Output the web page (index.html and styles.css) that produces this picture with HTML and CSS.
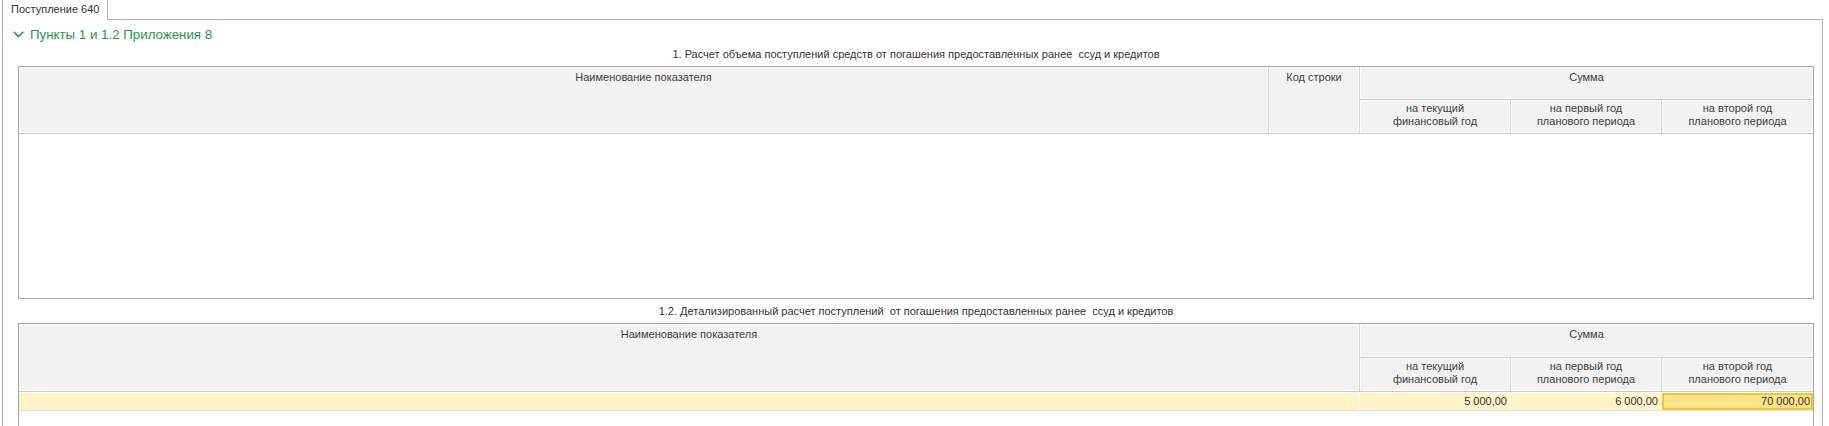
FILE: index.html
```html
<!DOCTYPE html>
<html lang="ru">
<head>
<meta charset="utf-8">
<title>Поступление 640</title>
<link rel="stylesheet" href="styles.css">
</head>
<body>
<div class="tabs">
  <div class="tab">Поступление 640</div>
  <div class="tabs-fill"></div>
</div>
<div class="panel">
  <div class="group-title">
    <svg class="chev" width="11" height="7" viewBox="0 0 11 7"><path d="M0.7 0.8 L5.5 5.6 L10.3 0.8" fill="none" stroke="#26964b" stroke-width="1.5"/></svg>
    <span>Пункты 1 и 1.2 Приложения 8</span>
  </div>
  <div class="caption cap1">1. Расчет объема поступлений средств от погашения предоставленных ранее  ссуд и кредитов</div>
  <div class="grid t1">
    <div class="hc name">Наименование показателя</div>
    <div class="hc code">Код строки</div>
    <div class="hc sum">Сумма</div>
    <div class="hc sub">на текущий<br>финансовый год</div>
    <div class="hc sub">на первый год<br>планового периода</div>
    <div class="hc sub last">на второй год<br>планового периода</div>
    <div class="body-empty"></div>
  </div>
  <div class="caption cap2">1.2. Детализированный расчет поступлений  от погашения предоставленных ранее  ссуд и кредитов</div>
  <div class="grid t2">
    <div class="hc name">Наименование показателя</div>
    <div class="hc sum">Сумма</div>
    <div class="hc sub">на текущий<br>финансовый год</div>
    <div class="hc sub">на первый год<br>планового периода</div>
    <div class="hc sub last">на второй год<br>планового периода</div>
    <div class="dc"></div>
    <div class="dc num">5 000,00</div>
    <div class="dc num">6 000,00</div>
    <div class="dc num last selected">70 000,00</div>
    <div class="rest"></div>
  </div>
</div>
</body>
</html>
```
FILE: styles.css
```css
* { box-sizing: border-box; }
html, body { margin: 0; padding: 0; background: #fff; }
body {
  font-family: "Liberation Sans", Arial, sans-serif;
  font-size: 11px;
  color: #333;
  width: 1829px;
  height: 426px;
  overflow: hidden;
}
.tabs { display: flex; height: 20px; }
.tab {
  margin-left: 2px;
  width: 106px;
  height: 20px;
  border-left: 1px solid #b4b4b4;
  border-right: 1px solid #b4b4b4;
  padding-left: 8px;
  line-height: 18px;
  background: #fff;
  color: #333;
}
.tabs-fill {
  width: 1715px;
  border-bottom: 1px solid #b4b4b4;
}
.panel {
  margin-left: 2px;
  width: 1821px;
  height: 406px;
  border-left: 1px solid #b4b4b4;
  border-right: 1px solid #b4b4b4;
  display: flex;
  flex-direction: column;
}
.group-title {
  display: flex;
  align-items: center;
  gap: 6px;
  height: 20px;
  margin-top: 4px;
  padding-left: 10px;
  font-size: 13.3px;
  color: #26964b;
}
.chev { display: block; margin-top: 1px; }
.caption {
  white-space: pre;
  text-align: center;
  margin-left: 15px;
  width: 1796px;
  color: #333;
}
.cap1 { height: 22px; line-height: 16px; padding-top: 2px; }
.cap2 { height: 24px; line-height: 24px; }
.grid {
  display: grid;
  margin-left: 15px;
  width: 1796px;
  border: 1px solid #a5a5a5;
}
.t1 {
  grid-template-columns: 1250px 91px 151px 151px 151px;
  grid-template-rows: 33px 34px 164px;
}
.t2 {
  flex: 1;
  border-bottom: none;
  grid-template-columns: 1341px 151px 151px 151px;
  grid-template-rows: 34px 34px 19px 1fr;
}
.hc {
  background: #f2f2f2;
  border-right: 1px solid #d2d2d2;
  border-bottom: 1px solid #c9c9c9;
  box-shadow: inset 0 0 0 1px #fff;
  text-align: center;
  color: #404040;
}
.hc.name, .hc.code { grid-row: span 2; padding-top: 3px; line-height: 14px; }
.hc.sum { grid-column: span 3; border-right: none; padding-top: 3px; line-height: 14px; }
.hc.sub { padding-top: 2px; line-height: 13px; }
.hc.last { border-right: none; }
.body-empty { grid-column: 1 / -1; background: #fff; }
.dc {
  background: #fff3c8;
  border-right: 1px solid #fff;
  border-bottom: 1px solid #e2e2e2;
  margin-top: 1px;
  line-height: 17px;
  color: #333;
}
.dc.num { text-align: right; padding-right: 3px; }
.dc.last { border-right: none; }
.dc.selected {
  background: #fee38c;
  box-shadow: inset 0 0 0 2px #f8c620;
}
.rest { grid-column: 1 / -1; background: #fff; }
```
